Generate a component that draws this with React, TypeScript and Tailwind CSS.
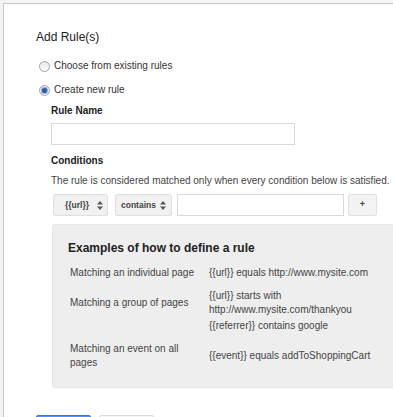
import React from "react";

function Radio({ checked }: { checked?: boolean }) {
    return (
        <span className="ml-[3px] flex h-[11px] w-[11px] shrink-0 items-center justify-center rounded-full border border-[#a3a3a3] bg-gradient-to-b from-[#e9e9e9] to-[#fdfdfd]">
            {checked && <span className="h-[5px] w-[5px] rounded-full bg-[#2c5e9e] shadow-[0_0_1px_1px_#7fa6d6]" />}
        </span>
    );
}

function Arrows() {
    return (
        <svg width="6" height="9" viewBox="0 0 6 9" className="ml-auto shrink-0">
            <path d="M3 0 L6 3.5 L0 3.5 Z" fill="#555" />
            <path d="M3 9 L6 5.5 L0 5.5 Z" fill="#555" />
        </svg>
    );
}

const examples = [
    { label: "Matching an individual page", value: "{{url}} equals http://www.mysite.com", mt: "mt-[10px]" },
    { label: "Matching a group of pages", value: "{{url}} starts with http://www.mysite.com/thankyou", mt: "mt-[9px]" },
    { label: "", value: "{{referrer}} contains google", mt: "mt-[2px]" },
    { label: "Matching an event on all pages", value: "{{event}} equals addToShoppingCart", mt: "mt-[9px]" },
];

export default function App() {
    return (
        <div className="h-[417px] w-[393px] overflow-hidden bg-[#f3f3f3] pl-[3px] pt-[3px] font-['Liberation_Sans',Arial,sans-serif]">
            <div className="h-[470px] w-[470px] border-l border-t border-[#c6c6c6] bg-white pl-[32px] pt-[25px]">
                {/* titulo */}
                <h1 className="text-[12px] leading-[16px] text-[#222]">Add Rule(s)</h1>

                {/* opciones */}
                <label className="mt-[14px] flex h-[14px] items-center gap-[4px] text-[10px] leading-[14px] text-[#333]">
                    <Radio />
                    Choose from existing rules
                </label>
                <label className="mt-[10px] flex h-[14px] items-center gap-[4px] text-[10px] leading-[14px] text-[#333]">
                    <Radio checked />
                    Create new rule
                </label>

                {/* formulario nueva regla */}
                <div className="ml-[15px] w-[380px]">
                    <div className="mt-[7px] text-[10px] font-bold leading-[14px] text-[#222]">Rule Name</div>
                    <div className="mt-[5px] h-[22px] w-[244px] border border-[#d9d9d9] bg-white" />

                    <div className="mt-[9px] text-[10px] font-bold leading-[14px] text-[#222]">Conditions</div>
                    <div className="mt-[6px] whitespace-nowrap text-[10px] leading-[14px] text-[#444]">
                        The rule is considered matched only when every condition below is satisfied.
                    </div>

                    <div className="ml-[2px] mt-[6px] flex h-[22px] items-stretch">
                        <div className="flex w-[55px] items-center rounded-[2px] border border-[#e0e0e0] bg-[#f1f1f1] pl-[11px] pr-[4px] text-[8.5px] font-bold text-[#444]">
                            {"{{url}}"}
                            <Arrows />
                        </div>
                        <div className="ml-[7px] flex w-[57px] items-center rounded-[2px] border border-[#e0e0e0] bg-[#f1f1f1] pl-[5px] pr-[5px] text-[8.5px] font-bold text-[#444]">
                            contains
                            <Arrows />
                        </div>
                        <div className="ml-[5px] w-[167px] border border-[#d9d9d9] bg-white" />
                        <div className="ml-[4px] flex w-[29px] items-center justify-center rounded-[2px] border border-[#e0e0e0] bg-[#f3f3f3] text-[9px] font-bold text-[#444]">
                            +
                        </div>
                    </div>
                </div>

                {/* ejemplos */}
                <div className="ml-[16px] mt-[8px] h-[164px] w-[400px] rounded-[3px] border border-[#e6e6e6] bg-[#eeeeee] pl-[15px] pt-[15px]">
                    <h2 className="text-[12px] font-bold leading-[16px] text-[#222]">Examples of how to define a rule</h2>
                    {examples.map((ex, i) => (
                        <div key={i} className={`ml-[2px] flex items-center text-[10px] leading-[14px] text-[#444] ${ex.mt}`}>
                            <div className="w-[139px] shrink-0 pr-[12px]">{ex.label}</div>
                            <div className="w-[183px]">{ex.value}</div>
                        </div>
                    ))}
                </div>

                {/* botones (solo asoman por abajo) */}
                <div className="mt-[27px] flex gap-[8px]">
                    <div className="h-[27px] w-[55px] rounded-[2px] border border-[#3079ed] bg-[#4d90fe]" />
                    <div className="h-[27px] w-[55px] rounded-[2px] border border-[#d9d9d9] bg-[#f5f5f5]" />
                </div>
            </div>
        </div>
    );
}
